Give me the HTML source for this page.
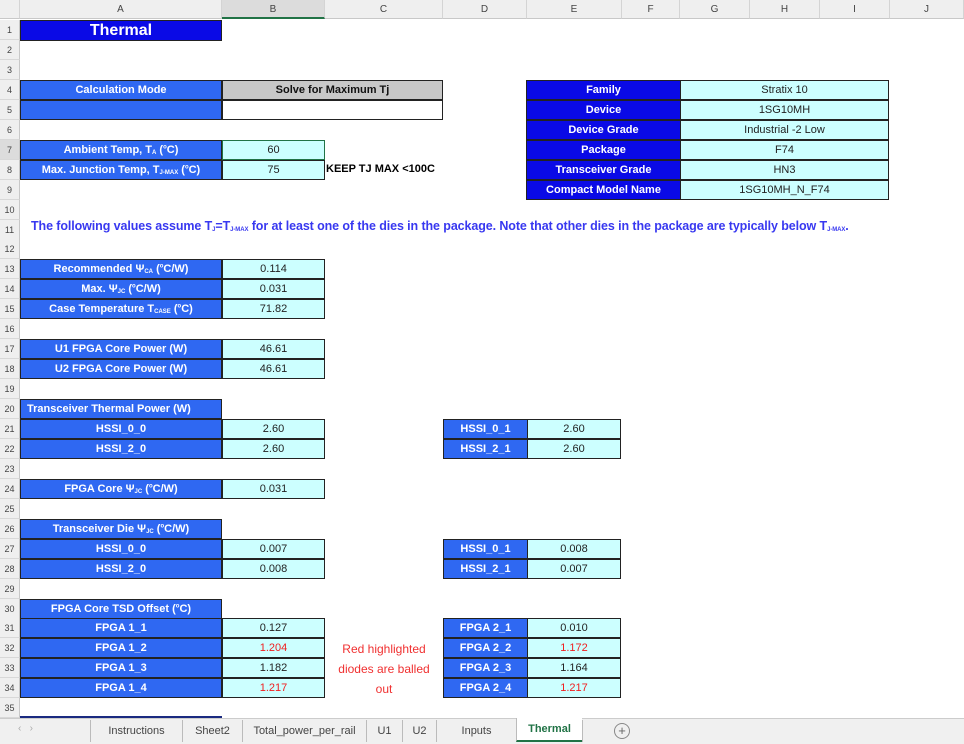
<!DOCTYPE html>
<html><head><meta charset="utf-8"><style>
*{margin:0;padding:0;box-sizing:border-box}
body{width:964px;height:744px;overflow:hidden;background:#fff;font-family:"Liberation Sans",Arial,sans-serif;position:relative}
.a{position:absolute}
.ch{position:absolute;top:0;height:19px;background:#efefef;border-right:1px solid #d4d4d4;border-bottom:1px solid #c8c8c8;font-size:10px;color:#444;text-align:center;line-height:19px}
.rh{position:absolute;left:0;width:20px;height:20px;background:#efefef;border-bottom:1px solid #d8d8d8;border-right:1px solid #c8c8c8;font-size:9px;color:#444;text-align:center;line-height:20px}
.c{position:absolute;height:20px;line-height:18px;font-size:11px;font-weight:bold;text-align:center;white-space:nowrap;border:1px solid #222}
.l{background:#2f68f2;color:#fff}
.d{background:#0a0ae6;color:#fff}
.v{background:#ccffff;color:#222;font-weight:normal}
.tab{position:absolute;top:720px;height:22px;font-size:11px;color:#444;line-height:22px;border-left:1px solid #bbb;text-align:center}
sub{font-size:6px;vertical-align:-1px;line-height:0}
sup{font-size:6px;line-height:0}
</style></head><body>
<div class="ch" style="left:0;width:20px"></div>
<div class="ch" style="left:20px;width:202px">A</div>
<div class="ch" style="left:222px;width:103px;background:#dcdcdc;border-bottom:2px solid #217346">B</div>
<div class="ch" style="left:325px;width:118px">C</div>
<div class="ch" style="left:443px;width:84px">D</div>
<div class="ch" style="left:527px;width:95px">E</div>
<div class="ch" style="left:622px;width:58px">F</div>
<div class="ch" style="left:680px;width:70px">G</div>
<div class="ch" style="left:750px;width:70px">H</div>
<div class="ch" style="left:820px;width:70px">I</div>
<div class="ch" style="left:890px;width:74px">J</div>

<div class="rh" style="top:20px">1</div><div class="rh" style="top:40px">2</div><div class="rh" style="top:60px">3</div><div class="rh" style="top:80px">4</div><div class="rh" style="top:100px">5</div><div class="rh" style="top:120px">6</div><div class="rh" style="top:140px;background:#dcdcdc">7</div><div class="rh" style="top:160px">8</div><div class="rh" style="top:180px">9</div><div class="rh" style="top:200px">10</div><div class="rh" style="top:220px">11</div><div class="rh" style="top:239px">12</div><div class="rh" style="top:259px">13</div><div class="rh" style="top:279px">14</div><div class="rh" style="top:299px">15</div><div class="rh" style="top:319px">16</div><div class="rh" style="top:339px">17</div><div class="rh" style="top:359px">18</div><div class="rh" style="top:379px">19</div><div class="rh" style="top:399px">20</div><div class="rh" style="top:419px">21</div><div class="rh" style="top:439px">22</div><div class="rh" style="top:459px">23</div><div class="rh" style="top:479px">24</div><div class="rh" style="top:499px">25</div><div class="rh" style="top:519px">26</div><div class="rh" style="top:539px">27</div><div class="rh" style="top:559px">28</div><div class="rh" style="top:579px">29</div><div class="rh" style="top:599px">30</div><div class="rh" style="top:618px">31</div><div class="rh" style="top:638px">32</div><div class="rh" style="top:658px">33</div><div class="rh" style="top:678px">34</div><div class="rh" style="top:698px">35</div>

<div class="c d" style="left:20px;top:20px;width:202px;height:21px;font-size:16px;line-height:19px">Thermal</div>

<div class="c l" style="left:20px;top:80px;width:202px">Calculation Mode</div>
<div class="c" style="left:222px;top:80px;width:221px;background:#c8c8c8;color:#111">Solve for Maximum Tj</div>
<div class="c l" style="left:20px;top:100px;width:202px"></div>
<div class="c" style="left:222px;top:100px;width:221px;background:#fff"></div>

<div class="c l" style="left:20px;top:140px;width:202px">Ambient Temp, T<sub>A</sub> (<sup>o</sup>C)</div>
<div class="c v" style="left:222px;top:140px;width:103px;border-color:#217346">60</div>
<div class="c l" style="left:20px;top:160px;width:202px">Max. Junction Temp, T<sub>J-MAX</sub> (<sup>o</sup>C)</div>
<div class="c v" style="left:222px;top:160px;width:103px">75</div>
<div class="a" style="left:326px;top:159px;font-size:11px;font-weight:bold;line-height:20px">KEEP TJ MAX &lt;100C</div>

<div class="c d" style="left:526px;top:80px;width:155px">Family</div><div class="c v" style="left:680px;top:80px;width:209px">Stratix 10</div>
<div class="c d" style="left:526px;top:100px;width:155px">Device</div><div class="c v" style="left:680px;top:100px;width:209px">1SG10MH</div>
<div class="c d" style="left:526px;top:120px;width:155px">Device Grade</div><div class="c v" style="left:680px;top:120px;width:209px">Industrial -2 Low</div>
<div class="c d" style="left:526px;top:140px;width:155px">Package</div><div class="c v" style="left:680px;top:140px;width:209px">F74</div>
<div class="c d" style="left:526px;top:160px;width:155px">Transceiver Grade</div><div class="c v" style="left:680px;top:160px;width:209px">HN3</div>
<div class="c d" style="left:526px;top:180px;width:155px">Compact Model Name</div><div class="c v" style="left:680px;top:180px;width:209px">1SG10MH_N_F74</div>

<div class="a" style="left:31px;top:216px;font-size:12.5px;font-weight:bold;color:#3838f0;line-height:20px;white-space:nowrap;letter-spacing:-0.1px">The following values assume T<sub>J</sub>=T<sub>J-MAX</sub> for at least one of the dies in the package. Note that other dies in the package are typically below T<sub>J-MAX</sub>.</div>

<div class="c l" style="left:20px;top:259px;width:202px">Recommended Ψ<sub>CA</sub> (<sup>o</sup>C/W)</div><div class="c v" style="left:222px;top:259px;width:103px">0.114</div>
<div class="c l" style="left:20px;top:279px;width:202px">Max. Ψ<sub>JC</sub> (<sup>o</sup>C/W)</div><div class="c v" style="left:222px;top:279px;width:103px">0.031</div>
<div class="c l" style="left:20px;top:299px;width:202px">Case Temperature T<sub>CASE</sub> (<sup>o</sup>C)</div><div class="c v" style="left:222px;top:299px;width:103px">71.82</div>

<div class="c l" style="left:20px;top:339px;width:202px">U1 FPGA Core Power (W)</div><div class="c v" style="left:222px;top:339px;width:103px">46.61</div>
<div class="c l" style="left:20px;top:359px;width:202px">U2 FPGA Core Power (W)</div><div class="c v" style="left:222px;top:359px;width:103px">46.61</div>

<div class="c l" style="left:20px;top:399px;width:202px;text-align:left;padding-left:6px">Transceiver Thermal Power (W)</div>
<div class="c l" style="left:20px;top:419px;width:202px">HSSI_0_0</div><div class="c v" style="left:222px;top:419px;width:103px">2.60</div>
<div class="c l" style="left:20px;top:439px;width:202px">HSSI_2_0</div><div class="c v" style="left:222px;top:439px;width:103px">2.60</div>
<div class="c l" style="left:443px;top:419px;width:85px">HSSI_0_1</div><div class="c v" style="left:527px;top:419px;width:94px">2.60</div>
<div class="c l" style="left:443px;top:439px;width:85px">HSSI_2_1</div><div class="c v" style="left:527px;top:439px;width:94px">2.60</div>

<div class="c l" style="left:20px;top:479px;width:202px">FPGA Core Ψ<sub>JC</sub> (<sup>o</sup>C/W)</div><div class="c v" style="left:222px;top:479px;width:103px">0.031</div>

<div class="c l" style="left:20px;top:519px;width:202px">Transceiver Die Ψ<sub>JC</sub> (<sup>o</sup>C/W)</div>
<div class="c l" style="left:20px;top:539px;width:202px">HSSI_0_0</div><div class="c v" style="left:222px;top:539px;width:103px">0.007</div>
<div class="c l" style="left:20px;top:559px;width:202px">HSSI_2_0</div><div class="c v" style="left:222px;top:559px;width:103px">0.008</div>
<div class="c l" style="left:443px;top:539px;width:85px">HSSI_0_1</div><div class="c v" style="left:527px;top:539px;width:94px">0.008</div>
<div class="c l" style="left:443px;top:559px;width:85px">HSSI_2_1</div><div class="c v" style="left:527px;top:559px;width:94px">0.007</div>

<div class="c l" style="left:20px;top:599px;width:202px">FPGA Core TSD Offset (<sup>o</sup>C)</div>
<div class="c l" style="left:20px;top:618px;width:202px">FPGA 1_1</div><div class="c v" style="left:222px;top:618px;width:103px">0.127</div>
<div class="c l" style="left:20px;top:638px;width:202px">FPGA 1_2</div><div class="c v" style="left:222px;top:638px;width:103px;color:#f02020">1.204</div>
<div class="c l" style="left:20px;top:658px;width:202px">FPGA 1_3</div><div class="c v" style="left:222px;top:658px;width:103px">1.182</div>
<div class="c l" style="left:20px;top:678px;width:202px">FPGA 1_4</div><div class="c v" style="left:222px;top:678px;width:103px;color:#f02020">1.217</div>
<div class="c l" style="left:443px;top:618px;width:85px">FPGA 2_1</div><div class="c v" style="left:527px;top:618px;width:94px">0.010</div>
<div class="c l" style="left:443px;top:638px;width:85px">FPGA 2_2</div><div class="c v" style="left:527px;top:638px;width:94px;color:#f02020">1.172</div>
<div class="c l" style="left:443px;top:658px;width:85px">FPGA 2_3</div><div class="c v" style="left:527px;top:658px;width:94px">1.164</div>
<div class="c l" style="left:443px;top:678px;width:85px">FPGA 2_4</div><div class="c v" style="left:527px;top:678px;width:94px;color:#f02020">1.217</div>
<div class="a" style="left:325px;top:639px;width:118px;text-align:center;font-size:12px;line-height:20px;color:#f03030">Red highlighted<br>diodes are balled<br>out</div>

<div class="a" style="left:20px;top:716px;width:202px;height:3px;background:#1a2a80"></div>
<div class="a" style="left:0;top:718px;width:964px;height:26px;background:#f0f0f0;border-top:1px solid #ccc"></div>
<div class="a" style="left:18px;top:723px;font-size:10px;color:#aaa">‹ &nbsp; ›</div>
<div class="tab" style="left:90px;width:92px">Instructions</div>
<div class="tab" style="left:182px;width:60px">Sheet2</div>
<div class="tab" style="left:242px;width:124px">Total_power_per_rail</div>
<div class="tab" style="left:366px;width:36px">U1</div>
<div class="tab" style="left:402px;width:34px">U2</div>
<div class="tab" style="left:436px;width:80px">Inputs</div>
<div class="tab" style="left:516px;width:66px;top:718px;height:24px;background:#fff;color:#217346;font-weight:bold;border-bottom:2px solid #217346">Thermal</div>
<div class="tab" style="left:582px;width:1px"></div>
<div class="a" style="left:614px;top:723px;width:16px;height:16px;border:1px solid #888;border-radius:50%;font-size:13px;line-height:13px;text-align:center;color:#666">+</div>
</body></html>
